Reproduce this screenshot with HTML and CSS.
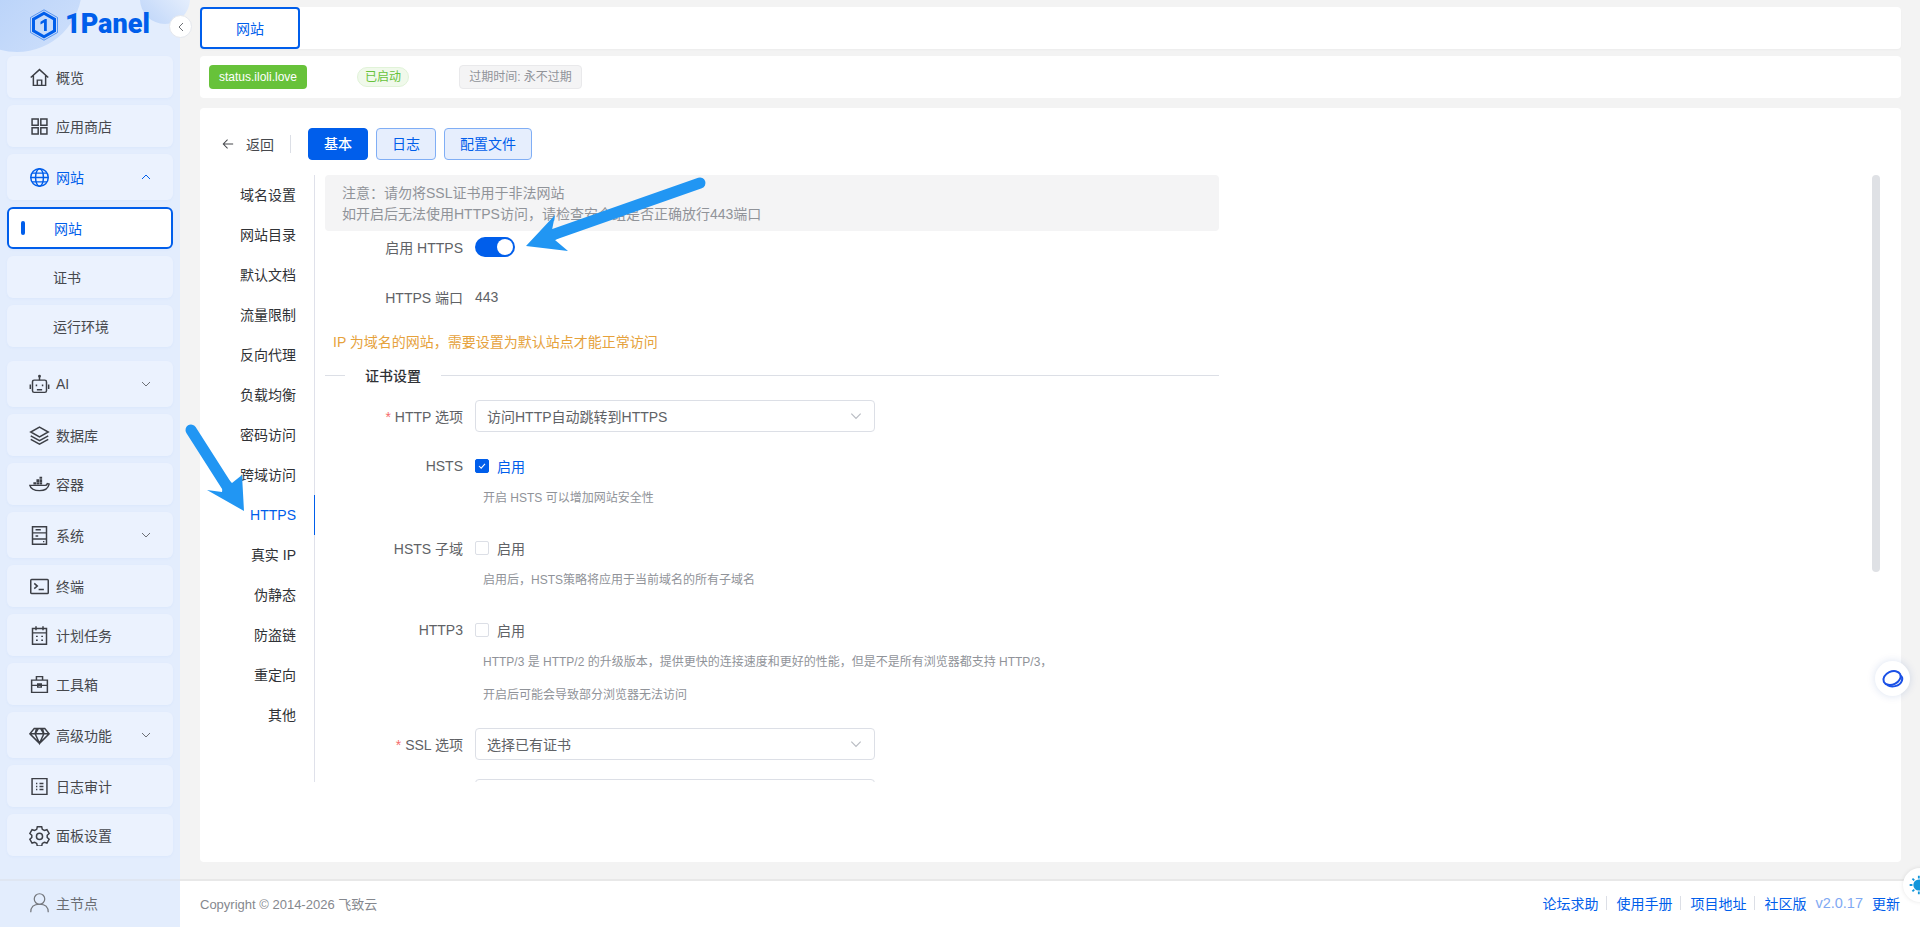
FILE: index.html
```html
<!DOCTYPE html>
<html lang="zh-CN">
<head>
    <meta charset="UTF-8">
    <title>1Panel - 网站</title>
    <link rel="stylesheet" href="styles.css">
</head>
<body>
    <svg class="icon-defs" width="0" height="0">
        <symbol id="chev-down" viewBox="0 0 12 12"><path d="M2 4l4 4 4-4"/></symbol>
        <symbol id="chev-up" viewBox="0 0 12 12"><path d="M2 8l4-4 4 4"/></symbol>
    </svg>

    <aside class="sidebar">
        <div class="blob blob-a"></div>
        <div class="blob blob-b"></div>
        <div class="logo">
            <svg class="logo-mark" viewBox="0 0 30 32">
                <path d="M15 .8l13.500 7.700v15L15 31.200 1.500 23.500v-15z" fill="none" stroke="#3d84ee" stroke-width=".8"/>
                <path d="M15 4.200l10.500 6v11.600l-10.500 6-10.500-6V10.200z" fill="none" stroke="#005eeb" stroke-width="3"/>
                <path d="M11.500 12.800l4.500-2.800h1.800v12h-2.800v-8.500l-3.500 2z" fill="#005eeb"/>
            </svg>
            <span class="logo-text">1Panel</span>
        </div>
        <button class="collapse-btn">
            <svg class="chev" viewBox="0 0 12 12"><path d="M8 2L4 6l4 4"/></svg>
        </button>

        <nav class="menu">
            <a class="menu-item">
                <svg class="menu-icon" viewBox="0 0 24 24"><path d="M2 12L12 3l10 9M5 10v11h14V10M9.500 21v-6h5v6"/></svg>
                <span>概览</span>
            </a>
            <a class="menu-item">
                <svg class="menu-icon" viewBox="0 0 24 24"><path d="M3.500 3.500h7v7h-7zM13.500 3.500h7v7h-7zM3.500 13.500h7v7h-7zM13.500 13.500h7v7h-7z"/></svg>
                <span>应用商店</span>
            </a>
            <a class="menu-item tall active-parent">
                <svg class="menu-icon" viewBox="0 0 24 24"><circle cx="12" cy="12" r="10"/><ellipse cx="12" cy="12" rx="4.500" ry="10"/><path d="M2 12h20M3.500 7h17M3.500 17h17"/></svg>
                <span>网站</span>
                <svg class="chev"><use href="#chev-up"/></svg>
            </a>
            <a class="menu-item sub current"><span class="sub-mark"></span><span>网站</span></a>
            <a class="menu-item sub"><span>证书</span></a>
            <a class="menu-item sub"><span>运行环境</span></a>
            <a class="menu-item tall group-start">
                <svg class="menu-icon" viewBox="0 0 24 24"><rect x="4" y="7" width="16" height="14" rx="2"/><path d="M12 7V3M1.500 12v5M22.500 12v5"/><circle cx="12" cy="2.500" r=".8"/><path d="M8.500 12v2M15.500 12v2M9 18h6"/></svg>
                <span>AI</span>
                <svg class="chev"><use href="#chev-down"/></svg>
            </a>
            <a class="menu-item">
                <svg class="menu-icon" viewBox="0 0 24 24"><path d="M12 2.500L22 8l-10 5.500L2 8zM2 12.500L12 18l10-5.500M2 16.500L12 22l10-5.500"/></svg>
                <span>数据库</span>
            </a>
            <a class="menu-item">
                <svg class="menu-icon" viewBox="0 0 24 24"><path d="M1 13h17.500c1.200 0 2-.8 2.500-2l2 .5c-1 4.500-5 7.500-11 7.500-6 0-10-2-11-6z"/><path class="whale-box" d="M5 9.500h3V12H5zM8.500 9.500h3V12h-3zM12 9.500h3V12h-3zM8.500 6h3v3h-3zM12 6h3v3h-3zM12 3h3v2.500h-3z"/></svg>
                <span>容器</span>
            </a>
            <a class="menu-item tall">
                <svg class="menu-icon" viewBox="0 0 24 24"><path d="M4 2h16v20H4zM4 9h16M4 16h16M7.500 5.500h6M7.500 12.500h3M16 19h1.500"/></svg>
                <span>系统</span>
                <svg class="chev"><use href="#chev-down"/></svg>
            </a>
            <a class="menu-item">
                <svg class="menu-icon" viewBox="0 0 24 24"><rect x="2" y="4" width="20" height="16" rx="1"/><path d="M6 8.500l3.500 3L6 14.500M11 15.500h6"/></svg>
                <span>终端</span>
            </a>
            <a class="menu-item">
                <svg class="menu-icon" viewBox="0 0 24 24"><path d="M4 4h16v18H4zM8 1.500V6M16 1.500V6M4 9h16M8 13h2M14 13h2M8 17.500h2M14 17.500h2"/></svg>
                <span>计划任务</span>
            </a>
            <a class="menu-item">
                <svg class="menu-icon" viewBox="0 0 24 24"><path d="M3 7h18v14H3zM8.500 7V3h7v4M3 13h18M10 11.500h4v3.500h-4z"/></svg>
                <span>工具箱</span>
            </a>
            <a class="menu-item tall">
                <svg class="menu-icon" viewBox="0 0 24 24"><path d="M6 4h12l5 6-11 11L1 10zM1 10h22M8.500 4.500L7 10l5 11 5-11-1.500-5.500M7 10l3.500-5.500M17 10l-3.500-5.500"/></svg>
                <span>高级功能</span>
                <svg class="chev"><use href="#chev-down"/></svg>
            </a>
            <a class="menu-item">
                <svg class="menu-icon" viewBox="0 0 24 24"><path d="M3.500 3h17v18h-17zM8 8.500h1.500M8 12h1.500M8 15.500h1.500M12 8.500h4.500M12 12h4.500M12 15.500h4.500"/></svg>
                <span>日志审计</span>
            </a>
            <a class="menu-item">
                <svg class="menu-icon" viewBox="0 0 24 24"><path d="M9.500 2h5l.7 3 2.300 1.300 3-.9 2.500 4.300-2.200 2.100v2.400l2.200 2.100-2.500 4.300-3-.9-2.300 1.300-.7 3h-5l-.7-3-2.300-1.300-3 .9L1 16.300l2.200-2.100v-2.400L1 9.700l2.500-4.300 3 .9 2.300-1.300z"/><circle cx="12" cy="13" r="3.500"/></svg>
                <span>面板设置</span>
            </a>
        </nav>

        <div class="node">
            <svg class="menu-icon node-icon" viewBox="0 0 24 24"><circle cx="12" cy="8" r="6"/><path d="M2 23c0-6 4-9 10-9s10 3 10 9"/></svg>
            <span>主节点</span>
        </div>
    </aside>

    <div class="page">
        <main class="main">
            <div class="bar tab-bar">
                <a class="tab-active">网站</a>
            </div>
            <div class="bar status-bar">
                <span class="tag-domain">status.iloli.love</span>
                <span class="tag-running">已启动</span>
                <span class="tag-expire">过期时间: 永不过期</span>
            </div>

            <section class="card">
                <div class="card-head">
                    <a class="back">
                        <svg class="back-arrow" viewBox="0 0 14 14"><path d="M13 7H1.500M6.500 2L1.500 7l5 5"/></svg>
                        <span>返回</span>
                    </a>
                    <span class="head-divider"></span>
                    <button class="btn btn-primary">基本</button>
                    <button class="btn btn-plain">日志</button>
                    <button class="btn btn-plain">配置文件</button>
                </div>

                <div class="card-body">
                    <ul class="side-tabs">
                        <li>域名设置</li>
                        <li>网站目录</li>
                        <li>默认文档</li>
                        <li>流量限制</li>
                        <li>反向代理</li>
                        <li>负载均衡</li>
                        <li>密码访问</li>
                        <li>跨域访问</li>
                        <li class="selected">HTTPS</li>
                        <li>真实 IP</li>
                        <li>伪静态</li>
                        <li>防盗链</li>
                        <li>重定向</li>
                        <li>其他</li>
                    </ul>

                    <div class="form">
                        <div class="alert">
                            <div>注意：请勿将SSL证书用于非法网站</div>
                            <div>如开启后无法使用HTTPS访问，请检查安全组是否正确放行443端口</div>
                        </div>
                        <div class="form-row first">
                            <label class="form-label">启用 HTTPS</label>
                            <span class="switch"><span class="switch-dot"></span></span>
                        </div>
                        <div class="form-row">
                            <label class="form-label">HTTPS 端口</label>
                            <span class="value">443</span>
                        </div>
                        <div class="warning">IP 为域名的网站，需要设置为默认站点才能正常访问</div>
                        <div class="divider"><span>证书设置</span></div>
                        <div class="form-row select-first">
                            <label class="form-label"><i>*</i> HTTP 选项</label>
                            <div class="select">访问HTTP自动跳转到HTTPS<svg class="chev select-chev"><use href="#chev-down"/></svg></div>
                        </div>
                        <div class="form-row">
                            <label class="form-label">HSTS</label>
                            <span class="check checked"><svg viewBox="0 0 14 14"><path d="M3.500 7l2.500 2.500 4.500-5"/></svg></span>
                            <span class="check-text on">启用</span>
                        </div>
                        <div class="help">开启 HSTS 可以增加网站安全性</div>
                        <div class="form-row after-help">
                            <label class="form-label">HSTS 子域</label>
                            <span class="check"></span>
                            <span class="check-text">启用</span>
                        </div>
                        <div class="help">启用后，HSTS策略将应用于当前域名的所有子域名</div>
                        <div class="form-row after-help">
                            <label class="form-label">HTTP3</label>
                            <span class="check"></span>
                            <span class="check-text">启用</span>
                        </div>
                        <div class="help">HTTP/3 是 HTTP/2 的升级版本，提供更快的连接速度和更好的性能，但是不是所有浏览器都支持 HTTP/3，</div>
                        <div class="help second">开启后可能会导致部分浏览器无法访问</div>
                        <div class="form-row ssl">
                            <label class="form-label"><i>*</i> SSL 选项</label>
                            <div class="select">选择已有证书<svg class="chev select-chev"><use href="#chev-down"/></svg></div>
                        </div>
                        <div class="form-row last">
                            <label class="form-label"></label>
                            <div class="select"></div>
                        </div>
                    </div>

                    <div class="scroll-thumb"></div>
                </div>
            </section>
        </main>

        <footer class="footer">
            <span class="copyright">Copyright © 2014-2026 飞致云</span>
            <div class="footer-links">
                <a>论坛求助</a><span class="sep"></span>
                <a>使用手册</a><span class="sep"></span>
                <a>项目地址</a><span class="sep"></span>
                <a>社区版</a>
                <span class="version">v2.0.17</span>
                <a>更新</a>
            </div>
        </footer>
    </div>

    <!-- floating helpers -->
    <div class="float-chat">
        <svg viewBox="0 0 24 24"><ellipse cx="11" cy="11" rx="9" ry="6.500" transform="rotate(-25 11 11)"/><path d="M6 18c4 2.500 13 2 15-4.500.6-2 0-4-1.500-5"/></svg>
    </div>
    <div class="float-theme">
        <svg viewBox="0 0 24 24"><circle cx="14" cy="12" r="5"/><path d="M14 2v3M14 19v3M4 12h3M7 5l2 2M7 19l2-2"/></svg>
    </div>

    <!-- annotation arrows drawn on top of the screenshot -->
    <svg class="annotations" viewBox="0 0 1920 927">
        <path d="M700 183L552 235" class="arrow-line"/>
        <path d="M526 246L555 215L552 230L570 232L555 240L568 251z" class="arrow-head"/>
        <path d="M191 430L228 488" class="arrow-line"/>
        <path d="M244 511L207 490L222 492L224 476L232 483L242 475z" class="arrow-head"/>
    </svg>
</body>
</html>
```
FILE: styles.css
```css
:root {
    --primary-color: #005eeb;
    --text-color: #46484d;
    --gray-color: #8f9399;
    --border-color: #dcdfe6;
    --side-bg: #e3edfd;
    --item-bg: #ebf2fe;
    --arrow-color: #2196f3;
}
* { margin: 0; padding: 0; box-sizing: border-box; }
html, body { height: 100%; }
body { display: flex; height: 927px; overflow: hidden; font-family: "Liberation Sans", "Noto Sans CJK SC", sans-serif; font-size: 14px; color: var(--text-color); background: #f3f3f3; position: relative; }
.icon-defs { position: absolute; }

/* sidebar */
.sidebar { width: 180px; flex: none; background: var(--side-bg); display: flex; flex-direction: column; position: relative; }
.blob { position: absolute; border-radius: 50%; }
.blob-a { width: 130px; height: 130px; left: -48px; top: -78px; background: linear-gradient(135deg, #a9c9f8, #cfe0fb); }
.blob-b { width: 50px; height: 50px; left: 140px; top: -26px; background: linear-gradient(225deg, #f3f7fe, #bcd4f9); }
.logo { height: 56px; padding: 8px 0 0 29px; display: flex; align-items: flex-start; gap: 6px; position: relative; }
.logo-mark { width: 30px; height: 34px; }
.logo-text { font-family: Roboto, "Liberation Sans", sans-serif; font-weight: 900; font-size: 27px; line-height: 33px; color: var(--primary-color); }
.collapse-btn { position: absolute; left: 169px; top: 15px; width: 23px; height: 23px; border-radius: 50%; background: #fff; border: 1px solid #e4e7ed; display: flex; align-items: center; justify-content: center; z-index: 3; }
.chev { width: 12px; height: 12px; fill: none; stroke: #6d7076; stroke-width: 1; }
.menu { display: flex; flex-direction: column; gap: 7px; padding: 0 7px; position: relative; }
.menu-item { height: 42px; background: var(--item-bg); border-radius: 6px; display: flex; align-items: center; padding-left: 22px; box-shadow: 0 1px 3px rgba(0, 94, 235, 0.04); }
.menu-item.tall { height: 46px; }
.menu-item.group-start { margin-top: 7px; }
.menu-item .chev { margin-left: auto; margin-right: 21px; }
.menu-icon { width: 21px; height: 21px; flex: none; margin-right: 6px; fill: none; stroke: #3c3f46; stroke-width: 1.700; }
.whale-box { fill: #3c3f46; stroke: none; }
.active-parent { color: var(--primary-color); }
.active-parent .menu-icon { stroke: var(--primary-color); }
.active-parent .chev { stroke: var(--primary-color); }
.menu-item.sub { padding-left: 46px; position: relative; }
.menu-item.current { background: #fff; border: 2px solid var(--primary-color); padding-left: 45px; color: var(--primary-color); }
.sub-mark { position: absolute; left: 12px; top: 12px; width: 4px; height: 14px; border-radius: 2px; background: var(--primary-color); }
.node { margin-top: auto; height: 48px; border-top: 2px solid #dfe6f2; display: flex; align-items: center; padding: 0 0 3px 29px; color: #6a6d73; }
.node-icon { stroke: #74777d; stroke-width: 1.400; margin-right: 6px; }

/* main column */
.page { flex: 1; min-width: 0; display: flex; flex-direction: column; }
.main { flex: 1; min-height: 0; padding: 7px 19px 0 20px; }
.bar { height: 42px; background: #fff; border-radius: 4px; }
.tab-bar { margin-bottom: 7px; box-shadow: 0 1px 2px rgba(0, 0, 0, 0.03); }
.tab-active { display: flex; width: 100px; height: 42px; align-items: center; justify-content: center; border: 2px solid var(--primary-color); border-radius: 4px; color: var(--primary-color); }
.status-bar { display: flex; align-items: center; padding-left: 9px; }
.tag-domain { width: 98px; height: 24px; line-height: 24px; text-align: center; font-size: 12px; color: #fff; background: #67c23a; border-radius: 4px; white-space: nowrap; }
.tag-running { margin-left: 50px; width: 52px; height: 20px; line-height: 18px; text-align: center; font-size: 12px; color: #67c23a; background: #f0f9eb; border: 1px solid #e1f3d8; border-radius: 10px; }
.tag-expire { margin-left: 50px; width: 123px; height: 24px; line-height: 22px; text-align: center; font-size: 12px; color: #909399; background: #f4f4f5; border: 1px solid #e9e9eb; border-radius: 4px; white-space: nowrap; }

.card { height: 754px; margin-top: 10px; background: #fff; border-radius: 4px; padding-top: 20px; }
.card-head { height: 32px; display: flex; align-items: center; padding-left: 22px; }
.back { display: flex; align-items: center; gap: 12px; }
.back-arrow { width: 12px; height: 12px; fill: none; stroke: #46484d; stroke-width: 1.200; }
.head-divider { width: 1px; height: 18px; background: #dcdfe6; margin: 0 17px 0 16px; }
.btn { height: 32px; width: 60px; margin-right: 8px; padding-bottom: 2px; font: inherit; border-radius: 4px; }
.btn:last-child { width: 88px; }
.btn-primary { background: var(--primary-color); border: 1px solid var(--primary-color); color: #fff; font-weight: 500; }
.btn-plain { background: #e6eefd; border: 1px solid #80aef5; color: var(--primary-color); }

.card-body { display: flex; height: 607px; margin-top: 15px; overflow: hidden; }
.side-tabs { width: 115px; flex: none; list-style: none; border-right: 1px solid #dfe1ea; height: 607px; }
.side-tabs li { height: 40px; line-height: 40px; text-align: right; padding-right: 18px; color: #303236; position: relative; }
.side-tabs li.selected { color: var(--primary-color); }
.side-tabs li.selected::after { content: ""; position: absolute; right: -1px; top: 0; width: 1px; height: 40px; background: var(--primary-color); }

.form { width: 894px; margin-left: 10px; flex: none; }
.alert { height: 56px; padding: 8px 17px; background: #f4f4f5; border-radius: 4px; color: #909399; font-size: 14px; line-height: 21px; }
.form-row { display: flex; align-items: center; min-height: 32px; margin-top: 18px; }
.form-row.first { margin-top: 0; }
.form-row.select-first { margin-top: 15px; }
.form-row.after-help { margin-top: 24px; }
.form-row.ssl { margin-top: 23px; }
.form-row.last { margin-top: 19px; }
.form-label { width: 138px; text-align: right; margin-right: 12px; color: #606266; flex: none; }
.form-label i { color: #f56c6c; font-style: normal; }
.switch { width: 40px; height: 20px; border-radius: 10px; background: var(--primary-color); display: flex; align-items: center; justify-content: flex-end; padding-right: 2px; }
.switch-dot { width: 16px; height: 16px; border-radius: 50%; background: #fff; }
.value { color: #606266; }
.warning { height: 20px; line-height: 20px; margin-top: 19px; padding-left: 8px; color: #e6a23c; }
.divider { display: flex; align-items: center; height: 20px; margin-top: 13px; color: #303236; font-weight: 500; font-size: 14px; }
.divider::before { content: ""; width: 20px; height: 1px; background: #dcdfe6; }
.divider::after { content: ""; flex: 1; height: 1px; background: #dcdfe6; }
.divider span { padding: 0 20px; }
.select { width: 400px; height: 32px; border: 1px solid var(--border-color); border-radius: 4px; padding: 0 11px; display: flex; align-items: center; color: #606266; }
.select-chev { width: 14px; height: 14px; margin-left: auto; margin-right: 0; stroke: #b8bbc2; }
.check { width: 14px; height: 14px; border: 1px solid var(--border-color); border-radius: 2px; background: #fff; display: block; }
.check.checked { background: var(--primary-color); border-color: var(--primary-color); }
.check svg { display: block; width: 12px; height: 12px; fill: none; stroke: #fff; stroke-width: 1.200; }
.check-text { margin-left: 8px; color: #606266; }
.check-text.on { color: var(--primary-color); }
.help { height: 20px; line-height: 20px; margin-top: 6px; padding-left: 158px; font-size: 12px; color: #909399; white-space: nowrap; }
.help.second { margin-top: 13px; }
.scroll-thumb { width: 8px; height: 397px; margin: 0 21px 0 auto; background: #dfe1e5; border-radius: 4px; }

.footer { height: 48px; flex: none; background: #fff; border-top: 2px solid #e8e8e8; display: flex; align-items: center; justify-content: space-between; padding: 0 20px 2px; }
.copyright { font-size: 13px; color: #85888e; }
.footer-links { display: flex; align-items: center; color: var(--primary-color); }
.sep { width: 1px; height: 14px; background: #dcdfe6; margin: 0 9px 0 8px; }
.version { margin: 0 9px; font-size: 14.500px; color: #7fa9f3; }

.float-chat { position: absolute; left: 1875px; top: 661px; width: 35px; height: 35px; border-radius: 50%; background: #fff; box-shadow: 0 0 8px rgba(0, 60, 160, 0.15); display: flex; align-items: center; justify-content: center; }
.float-chat svg { width: 24px; height: 24px; fill: none; stroke: #1a50e6; stroke-width: 2; }
.float-theme { position: absolute; left: 1903px; top: 868px; width: 34px; height: 34px; border-radius: 50%; background: #fff; box-shadow: 0 0 4px rgba(0, 0, 0, 0.1); padding: 6px 0 0 3px; }
.float-theme svg { display: block; width: 22px; height: 22px; fill: #1296db; stroke: #1296db; stroke-width: 2; }

.annotations { position: absolute; left: 0; top: 0; width: 1920px; height: 927px; pointer-events: none; z-index: 5; }
.arrow-line { fill: none; stroke: var(--arrow-color); stroke-width: 11; stroke-linecap: round; }
.arrow-head { fill: var(--arrow-color); }
```
